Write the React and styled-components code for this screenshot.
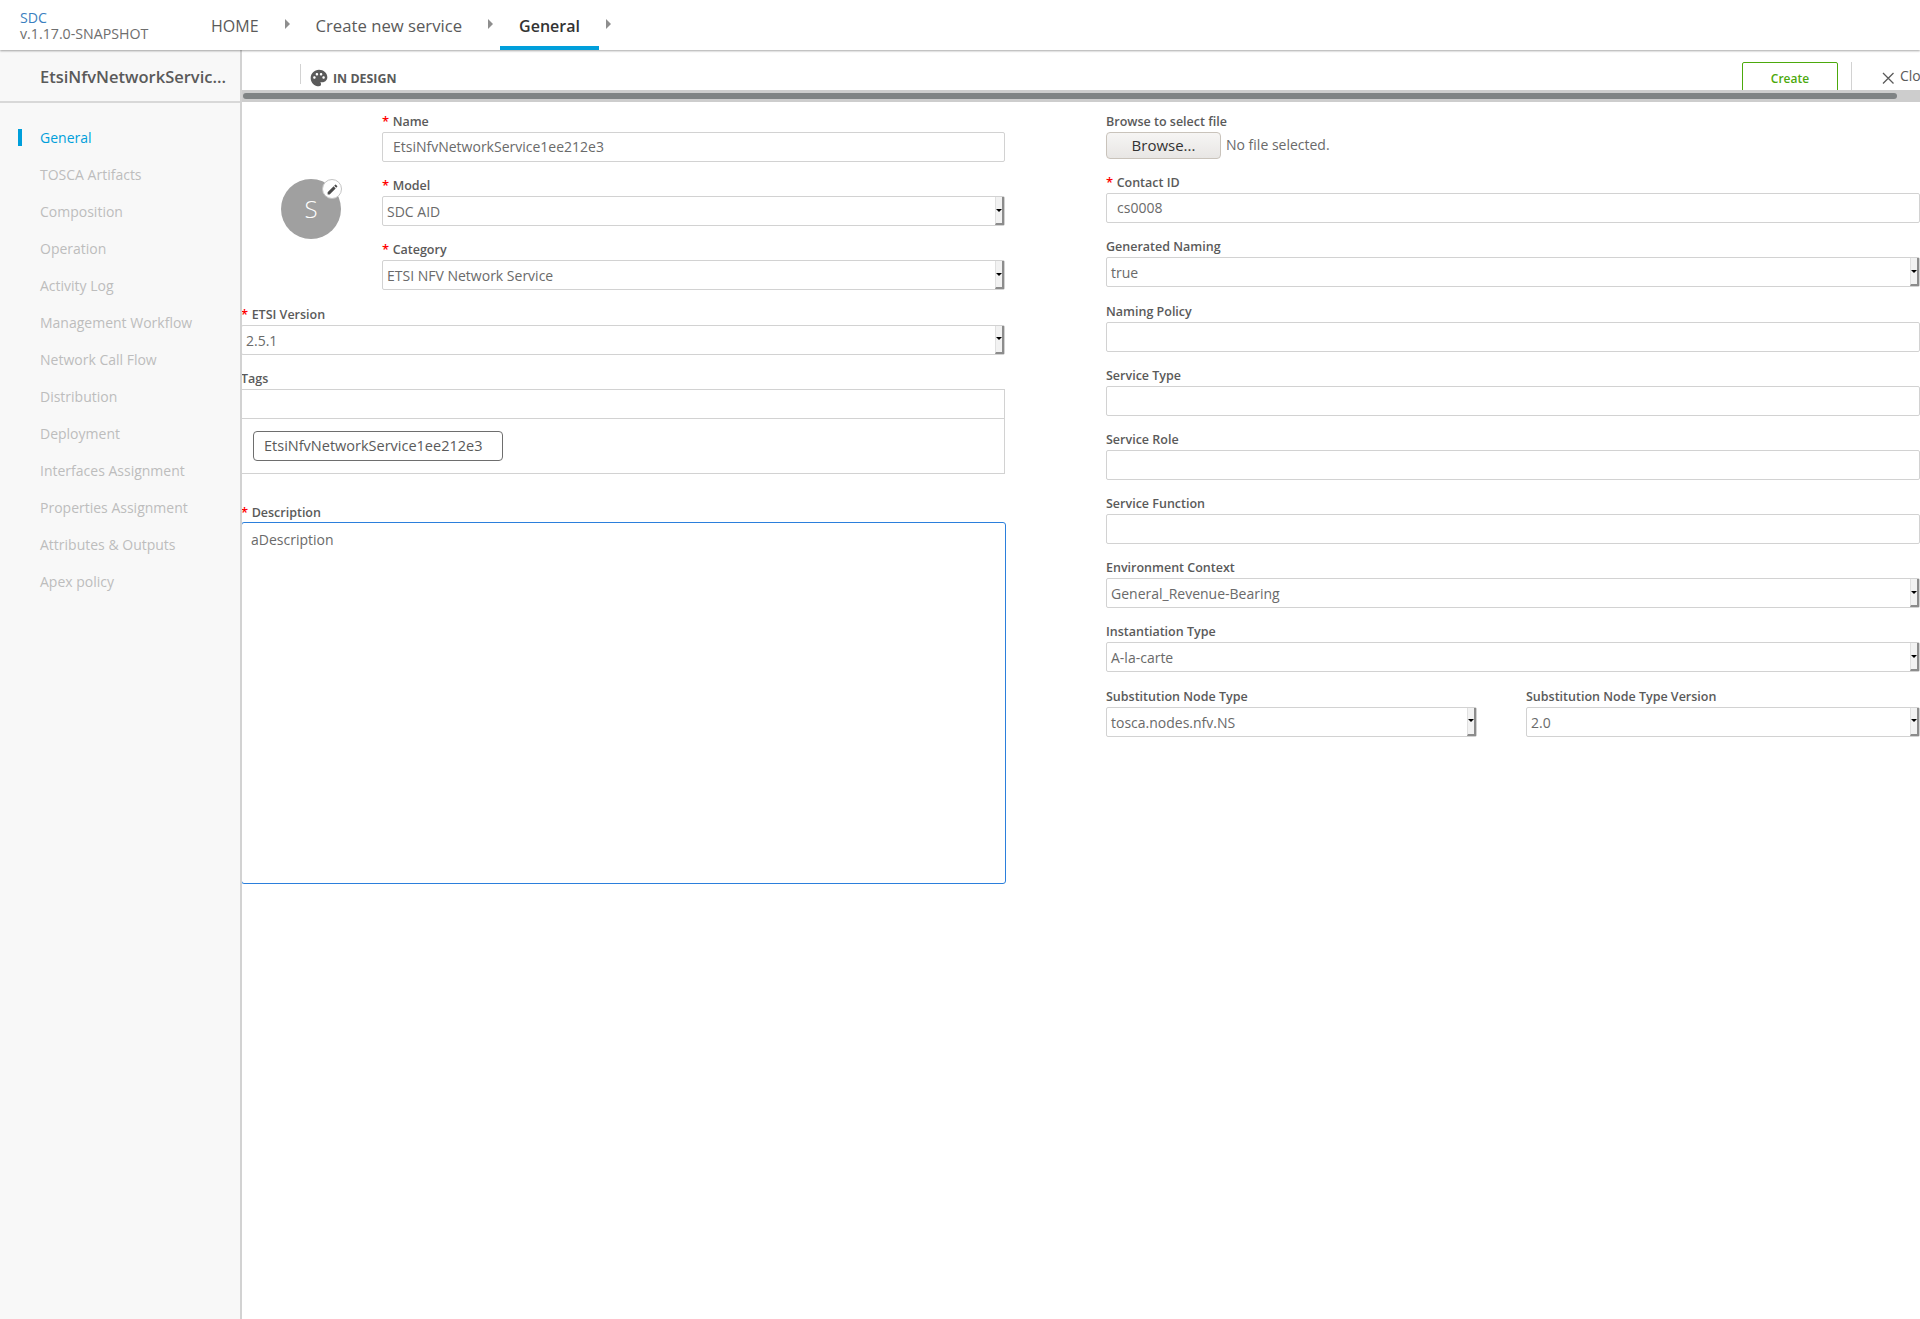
import styled, { createGlobalStyle } from "styled-components";
import { MdPalette, MdEdit } from "react-icons/md";

const GlobalStyle = createGlobalStyle`
    html, body {
        margin: 0;
        padding: 0;
        background: #fff;
    }
    body {
        font-family: "Open Sans", "Liberation Sans", sans-serif;
        color: #5a5a5a;
    }
    * {
        box-sizing: border-box;
    }
`;

const menuItems = [
    "General",
    "TOSCA Artifacts",
    "Composition",
    "Operation",
    "Activity Log",
    "Management Workflow",
    "Network Call Flow",
    "Distribution",
    "Deployment",
    "Interfaces Assignment",
    "Properties Assignment",
    "Attributes & Outputs",
    "Apex policy",
];

const breadcrumbs = [
    { text: "HOME", size: 16 },
    { text: "Create new service", size: 16.7 },
    { text: "General", size: 16, active: true },
];

function Caret() {
    return (
        <CaretButton>
            <CaretArrow />
        </CaretButton>
    );
}

function TextField({ label, required, value }) {
    return (
        <Group>
            <Label $required={required}>{label}</Label>
            <Input>{value}</Input>
        </Group>
    );
}

function SelectField({ label, required, value }) {
    return (
        <Group>
            <Label $required={required}>{label}</Label>
            <Select>
                <span>{value}</span>
                <Caret />
            </Select>
        </Group>
    );
}

export default function App() {
    return (
        <Page>
            <GlobalStyle />
            <Header>
                <Brand>
                    <BrandName>SDC</BrandName>
                    <BrandVersion>v.1.17.0-SNAPSHOT</BrandVersion>
                </Brand>
                <Crumbs>
                    {breadcrumbs.map((c) => (
                        <Crumb key={c.text} $size={c.size} $active={c.active}>
                            {c.text}
                            <CrumbArrow />
                        </Crumb>
                    ))}
                </Crumbs>
            </Header>

            <Body>
                <Sidebar>
                    <SidebarTitle>EtsiNfvNetworkServic...</SidebarTitle>
                    <Menu>
                        {menuItems.map((item, i) => (
                            <MenuItem key={item} $active={i === 0}>
                                {item}
                            </MenuItem>
                        ))}
                    </Menu>
                </Sidebar>

                <Main>
                    <Toolbar>
                        <Status>
                            <MdPalette size={20} />
                            IN DESIGN
                        </Status>
                        <CreateButton>Create</CreateButton>
                        <CloseLink>
                            <svg width="13" height="13" viewBox="0 0 13 13">
                                <path d="M1 1 L11.5 11.5 M11.5 1 L1 11.5" stroke="#5a5a5a" strokeWidth="1.3" fill="none" />
                            </svg>
                            <span>Close</span>
                        </CloseLink>
                    </Toolbar>
                    <ScrollTrack>
                        <ScrollThumb />
                    </ScrollTrack>

                    <Form>
                        <LeftColumn>
                            <TopFields>
                                <IconBox>
                                    <Avatar>
                                        S
                                        <EditBadge>
                                            <MdEdit size={13} />
                                        </EditBadge>
                                    </Avatar>
                                </IconBox>
                                <TopStack>
                                    <TextField label="Name" required value="EtsiNfvNetworkService1ee212e3" />
                                    <SelectField label="Model" required value="SDC AID" />
                                    <SelectField label="Category" required value="ETSI NFV Network Service" />
                                </TopStack>
                            </TopFields>
                            <SelectField label="ETSI Version" required value="2.5.1" />
                            <Label>Tags</Label>
                            <TagInput />
                            <TagArea>
                                <Tag>EtsiNfvNetworkService1ee212e3</Tag>
                            </TagArea>
                            <Label $required>Description</Label>
                            <Description>aDescription</Description>
                        </LeftColumn>

                        <RightColumn>
                            <Label>Browse to select file</Label>
                            <FileRow>
                                <BrowseButton>Browse...</BrowseButton>
                                <FileName>No file selected.</FileName>
                            </FileRow>
                            <TextField label="Contact ID" required value="cs0008" />
                            <SelectField label="Generated Naming" value="true" />
                            <TextField label="Naming Policy" />
                            <TextField label="Service Type" />
                            <TextField label="Service Role" />
                            <TextField label="Service Function" />
                            <SelectField label="Environment Context" value="General_Revenue-Bearing" />
                            <SelectField label="Instantiation Type" value="A-la-carte" />
                            <SubstitutionRow>
                                <SelectField label="Substitution Node Type" value="tosca.nodes.nfv.NS" />
                                <SelectField label="Substitution Node Type Version" value="2.0" />
                            </SubstitutionRow>
                        </RightColumn>
                    </Form>
                </Main>
            </Body>
        </Page>
    );
}

const Page = styled.div`
    width: 1920px;
    height: 1319px;
    overflow: hidden;
    display: flex;
    flex-direction: column;
`;

const Header = styled.header`
    position: relative;
    z-index: 2;
    height: 50px;
    flex: none;
    display: flex;
    background: #fff;
    box-shadow: 0 1px 2px rgba(0, 0, 0, 0.35);
`;

const Brand = styled.div`
    width: 192px;
    padding: 10px 0 0 20px;
    font-size: 14.2px;
    line-height: 16px;
`;

const BrandName = styled.div`
    color: #3b7fc0;
`;

const BrandVersion = styled.div`
    color: #6e6e6e;
`;

const Crumbs = styled.nav`
    display: flex;
    gap: 19px;
`;

const Crumb = styled.div`
    position: relative;
    height: 50px;
    padding: 14px 19px 0;
    font-size: ${(p) => p.$size}px;
    line-height: 24px;
    font-weight: ${(p) => (p.$active ? 600 : 400)};
    color: ${(p) => (p.$active ? "#333" : "#5a5a5a")};
    border-bottom: 4px solid ${(p) => (p.$active ? "#009fdb" : "transparent")};
`;

const CrumbArrow = styled.span`
    position: absolute;
    top: 19px;
    right: -12px;
    border-left: 5px solid #8e8e8e;
    border-top: 5px solid transparent;
    border-bottom: 5px solid transparent;
`;

const Body = styled.div`
    flex: 1;
    display: flex;
    min-height: 0;
`;

const Sidebar = styled.aside`
    width: 242px;
    flex: none;
    background: #f8f8f8;
    border-right: 2px solid #d2d2d2;
`;

const SidebarTitle = styled.div`
    height: 53px;
    padding: 15px 0 0 40px;
    font-size: 16.5px;
    line-height: 24px;
    font-weight: 600;
    color: #5a5a5a;
    border-bottom: 2px solid #d8d8d8;
    white-space: nowrap;
`;

const Menu = styled.div`
    padding-top: 16px;
`;

const MenuItem = styled.div`
    position: relative;
    height: 37px;
    padding-left: 40px;
    font-size: 14px;
    line-height: 37px;
    color: ${(p) => (p.$active ? "#009fdb" : "#bdbdbd")};

    &::before {
        content: "";
        display: ${(p) => (p.$active ? "block" : "none")};
        position: absolute;
        left: 18px;
        top: 10px;
        width: 4px;
        height: 17px;
        background: #009fdb;
    }
`;

const Main = styled.main`
    flex: 1;
    min-width: 0;
    overflow: hidden;
`;

const Toolbar = styled.div`
    height: 40px;
    display: flex;
    padding-top: 12px;
    position: relative;
    overflow: hidden;
`;

const Status = styled.div`
    display: flex;
    align-items: center;
    gap: 4px;
    height: 20px;
    margin: 2px 0 0 58px;
    padding: 8px 0 0 8px;
    border-left: 1px solid #d2d2d2;
    font-size: 12.4px;
    font-weight: 700;
    color: #5a5a5a;
`;

const CreateButton = styled.div`
    margin-left: auto;
    width: 96px;
    height: 34px;
    border: 1px solid #4ca90c;
    border-radius: 2px;
    color: #4ca90c;
    font-size: 12px;
    font-weight: 600;
    line-height: 31px;
    text-align: center;
`;

const CloseLink = styled.div`
    width: 69px;
    flex: none;
    margin-left: 13px;
    padding-left: 30px;
    border-left: 1px solid #d2d2d2;
    display: flex;
    gap: 5px;
    font-size: 14px;
    line-height: 28px;
    white-space: nowrap;
    overflow: hidden;

    svg {
        flex: none;
        margin-top: 10px;
    }
`;

const ScrollTrack = styled.div`
    height: 12px;
    padding: 3px 0 0 1px;
    background: #cdcdcd;
`;

const ScrollThumb = styled.div`
    width: 1654px;
    height: 6px;
    border-radius: 3px;
    background: #7f8384;
`;

const Form = styled.div`
    display: flex;
    padding-top: 10.1px;
    margin-left: -1px;
`;

const LeftColumn = styled.div`
    width: 764px;
    flex: none;
`;

const TopFields = styled.div`
    display: flex;
`;

const IconBox = styled.div`
    width: 141px;
    flex: none;
    padding: 67px 0 0 40px;
`;

const Avatar = styled.div`
    position: relative;
    width: 60px;
    height: 60px;
    border-radius: 50%;
    background: #a0a0a0;
    color: #fff;
    font-size: 24px;
    font-weight: 300;
    line-height: 60px;
    text-align: center;
`;

const EditBadge = styled.div`
    position: absolute;
    top: 0;
    right: -1px;
    width: 20px;
    height: 20px;
    display: flex;
    align-items: center;
    justify-content: center;
    background: #fff;
    border: 1px solid #c4c4c4;
    border-radius: 50%;
    color: #4a4a4a;
`;

const TopStack = styled.div`
    flex: 1;
`;

const Group = styled.div`
    margin-bottom: 14.18px;
`;

const Label = styled.div`
    height: 20px;
    font-size: 12.5px;
    line-height: 19px;
    font-weight: 600;
    color: #5a5a5a;
    white-space: nowrap;

    &::before {
        content: "*";
        display: ${(p) => (p.$required ? "inline" : "none")};
        margin-right: 3.5px;
        font-size: 13px;
        color: #f00;
    }
`;

const Input = styled.div`
    height: 30px;
    padding: 0 10px;
    border: 1px solid #d2d2d2;
    border-radius: 2px;
    font-size: 14px;
    line-height: 28px;
    color: #6a6a6a;
`;

const Select = styled.div`
    height: 30px;
    display: flex;
    justify-content: space-between;
    padding-left: 4px;
    border: 1px solid #d2d2d2;
    border-radius: 2px;
    font-size: 14px;
    line-height: 30px;
    color: #6a6a6a;
`;

const CaretButton = styled.span`
    width: 9px;
    display: flex;
    align-items: center;
    justify-content: center;
    background: #f2f2f2;
    border-right: 2px solid #8c8c8c;
    border-bottom: 2px solid #8c8c8c;
    border-left: 1px solid #e0e0e0;
`;

const CaretArrow = styled.span`
    border-top: 3px solid #000;
    border-left: 3px solid transparent;
    border-right: 3px solid transparent;
`;

const TagInput = styled.div`
    height: 30px;
    border: 1px solid #d2d2d2;
    border-left: 0;
`;

const TagArea = styled.div`
    height: 56px;
    margin: -1px 0 29px;
    padding: 13px 0 0 12px;
    border: 1px solid #d2d2d2;
    border-top: 0;
    border-left: 0;
`;

const Tag = styled.div`
    width: 250px;
    height: 30px;
    padding-left: 10px;
    border: 1px solid #6e6e6e;
    border-radius: 4px;
    font-size: 14.5px;
    line-height: 27px;
    color: #5a5a5a;
`;

const Description = styled.div`
    height: 362px;
    margin: -1px -1px 0 0;
    padding: 7px 9px;
    border: 1px solid #2b7fdc;
    border-radius: 3px;
    font-size: 14px;
    line-height: 19px;
    color: #6a6a6a;
`;

const RightColumn = styled.div`
    width: 814px;
    flex: none;
    margin-left: 101px;
`;

const FileRow = styled.div`
    display: flex;
    align-items: flex-start;
    gap: 5px;
    height: 27px;
    margin-bottom: 14.1px;
`;

const FileName = styled.span`
    font-size: 14px;
    line-height: 25px;
    color: #6a6a6a;
`;

const BrowseButton = styled.div`
    width: 115px;
    height: 27px;
    background: linear-gradient(#f6f5f4, #e8e6e4);
    border: 1px solid #c9c3bb;
    border-radius: 4px;
    font-size: 15px;
    line-height: 25px;
    text-align: center;
    color: #333;
`;

const SubstitutionRow = styled.div`
    display: grid;
    grid-template-columns: 371px 394px;
    column-gap: 49px;
`;
